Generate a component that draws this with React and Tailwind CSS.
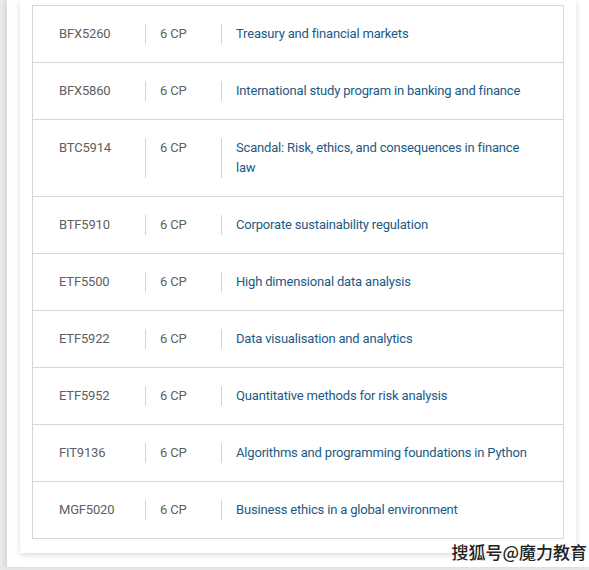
import React from 'react';

const units = [
  { code: 'BFX5260', cp: '6 CP', title: 'Treasury and financial markets' },
  { code: 'BFX5860', cp: '6 CP', title: 'International study program in banking and finance' },
  { code: 'BTC5914', cp: '6 CP', title: 'Scandal: Risk, ethics, and consequences in finance law' },
  { code: 'BTF5910', cp: '6 CP', title: 'Corporate sustainability regulation' },
  { code: 'ETF5500', cp: '6 CP', title: 'High dimensional data analysis' },
  { code: 'ETF5922', cp: '6 CP', title: 'Data visualisation and analytics' },
  { code: 'ETF5952', cp: '6 CP', title: 'Quantitative methods for risk analysis' },
  { code: 'FIT9136', cp: '6 CP', title: 'Algorithms and programming foundations in Python' },
  { code: 'MGF5020', cp: '6 CP', title: 'Business ethics in a global environment' },
];

function UnitRow({ unit }) {
  return (
    <div className="flex border-b border-[#d6d6d6] pt-[18px] pb-[18px] text-[13px] leading-[20px] tracking-[-0.18px]">
      <div className="w-[112px] shrink-0 pl-[26px] text-[#606060]">{unit.code}</div>
      <div className="w-[76px] shrink-0 border-l border-[#d4d4d4] pl-[14px] text-[#606060]">{unit.cp}</div>
      <div className="flex-1 border-l border-[#d4d4d4] pl-[14px] pr-[26px] text-[#1b5a86]">{unit.title}</div>
    </div>
  );
}

export default function App() {
  return (
    <div className="relative h-[570px] w-[589px] overflow-hidden bg-[#ebebeb] font-['Roboto','Liberation_Sans',sans-serif]">
      <div className="ml-[7px] h-[567px] bg-white shadow-[-3px_1px_4px_rgba(0,0,0,0.08)] pl-[13px]">
        <div className="w-[556px] bg-white px-[12px] pt-[5px] pb-[14px] shadow-[0_2px_6px_rgba(0,0,0,0.14)]">
          <div className="border-x border-t border-[#d6d6d6]">
            {units.map((u) => (
              <UnitRow key={u.code} unit={u} />
            ))}
          </div>
        </div>
      </div>
      <div className="absolute right-[2px] bottom-[10px] text-[17px] font-medium leading-none text-[#222] font-['Noto_Sans_CJK_SC',sans-serif] [text-shadow:0_0_2px_#fff,0_0_2px_#fff,0_0_2px_#fff]">
        搜狐号@魔力教育
      </div>
    </div>
  );
}
